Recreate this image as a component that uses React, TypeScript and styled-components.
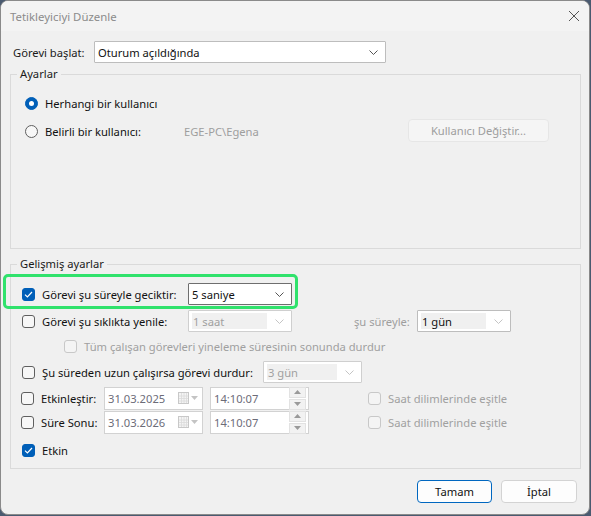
import styled, { createGlobalStyle, css } from "styled-components";

const GlobalStyle = createGlobalStyle`
  html, body {
    margin: 0;
    padding: 0;
    background: #4a5a70;
  }
  body {
    font-family: "Noto Sans", "Liberation Sans", sans-serif;
    font-size: 11.2px;
    color: #1a1a1a;
  }
`;

const Window = styled.div`
  position: relative;
  box-sizing: border-box;
  width: 590px;
  height: 515px;
  border: 1px solid #8a8a8a;
  border-radius: 8px;
  background: #f0f0f0;
  overflow: hidden;
  display: flex;
  flex-direction: column;
`;

const TitleBar = styled.div`
  height: 30px;
  flex: none;
  display: flex;
  align-items: center;
  justify-content: space-between;
  padding-left: 9px;
  background: #f3f3f3;
`;

const TitleText = styled.span`
  font-size: 11.4px;
  color: #8b8b8b;
  padding-top: 1px;
`;

const CloseButton = styled.div`
  width: 30px;
  height: 30px;
  display: flex;
  align-items: center;
  justify-content: center;
`;

const Content = styled.div`
  flex: 1;
  display: flex;
  flex-direction: column;
  padding: 0 8px 0 9px;
`;

const TopRow = styled.div`
  display: flex;
  align-items: center;
  height: 22px;
  margin-top: 10px;
  padding-left: 3px;
`;

const TopLabel = styled.span`
  width: 81px;
`;

const GroupBox = styled.div<{ $h: number; $mt: number }>`
  position: relative;
  box-sizing: border-box;
  height: ${(p) => p.$h}px;
  margin-top: ${(p) => p.$mt}px;
  border: 1px solid #dadada;
  display: flex;
  flex-direction: column;
`;

const GroupTitle = styled.span<{ $left: number }>`
  position: absolute;
  top: -9px;
  left: ${(p) => p.$left}px;
  padding: 0 3px;
  background: #f0f0f0;
  line-height: 16px;
`;

const Row = styled.div<{ $mt: number; $indent?: number }>`
  display: flex;
  align-items: center;
  height: 22px;
  margin-top: ${(p) => p.$mt}px;
  padding-left: ${(p) => p.$indent ?? 10}px;
`;

const OptionLabel = styled.label<{ $w?: number; $disabled?: boolean; $ml?: number }>`
  display: flex;
  align-items: center;
  gap: 7px;
  flex: none;
  width: ${(p) => (p.$w ? `${p.$w}px` : "auto")};
  margin-left: ${(p) => p.$ml ?? 0}px;
  color: ${(p) => (p.$disabled ? "#a0a0a0" : "#111")};
  white-space: nowrap;
`;

const Box = styled.span<{ $checked?: boolean; $disabled?: boolean }>`
  box-sizing: border-box;
  width: 13px;
  height: 13px;
  flex: none;
  border-radius: 3px;
  display: flex;
  align-items: center;
  justify-content: center;
  border: 1px solid #5f5f5f;
  background: #f7f7f7;
  ${(p) =>
    p.$checked &&
    css`
      border-color: #005fb8;
      background: #005fb8;
    `}
  ${(p) =>
    p.$disabled &&
    css`
      border-color: #c8c8c8;
      background: #f4f4f4;
    `}
`;

const Radio = styled.span<{ $checked?: boolean }>`
  box-sizing: border-box;
  width: 13px;
  height: 13px;
  flex: none;
  border-radius: 50%;
  display: flex;
  align-items: center;
  justify-content: center;
  border: 1px solid #5f5f5f;
  background: #f7f7f7;
  ${(p) =>
    p.$checked &&
    css`
      border-color: #005fb8;
      background: #005fb8;
      &::after {
        content: "";
        width: 5px;
        height: 5px;
        border-radius: 50%;
        background: #fff;
      }
    `}
`;

const Muted = styled.span<{ $ml?: number; $w?: number }>`
  color: #9e9e9e;
  margin-left: ${(p) => p.$ml ?? 0}px;
  width: ${(p) => (p.$w ? `${p.$w}px` : "auto")};
  flex: none;
  white-space: nowrap;
`;

const Combo = styled.div<{ $w: number; $focus?: boolean; $disabled?: boolean; $ml?: number }>`
  box-sizing: border-box;
  width: ${(p) => p.$w}px;
  height: 22px;
  flex: none;
  margin-left: ${(p) => p.$ml ?? 0}px;
  display: flex;
  align-items: center;
  justify-content: space-between;
  padding: 0 7px 0 3px;
  background: #fff;
  border: 1px solid ${(p) => (p.$focus ? "#6e6e6e" : p.$disabled ? "#cfcfcf" : "#bdbdbd")};
  border-radius: 1px;
  color: ${(p) => (p.$disabled ? "#a0a0a0" : "#111")};
`;

const ComboText = styled.span<{ $fill?: boolean }>`
  flex: 1;
  align-self: stretch;
  margin: 2px 8px 2px 0;
  padding-left: 1px;
  display: flex;
  align-items: center;
  background: ${(p) => (p.$fill ? "#f0f0f0" : "transparent")};
`;

const Field = styled.div<{ $w: number; $ml?: number }>`
  box-sizing: border-box;
  width: ${(p) => p.$w}px;
  height: 23px;
  flex: none;
  margin-left: ${(p) => p.$ml ?? 0}px;
  display: flex;
  align-items: center;
  justify-content: space-between;
  padding: 0 2px 0 3px;
  background: #fff;
  border: 1px solid #d2d2d2;
  color: #6c6c78;
`;

const Spinner = styled.div`
  display: flex;
  flex-direction: column;
  gap: 1px;
`;

const SpinPart = styled.span`
  width: 15px;
  height: 9px;
  display: flex;
  align-items: center;
  justify-content: center;
  background: #f2f2f2;
  border: 1px solid #e2e2e2;
`;

const Button = styled.div<{ $disabled?: boolean; $default?: boolean; $w: number }>`
  box-sizing: border-box;
  width: ${(p) => p.$w}px;
  height: 23px;
  flex: none;
  display: flex;
  align-items: center;
  justify-content: center;
  border-radius: 4px;
  background: ${(p) => (p.$disabled ? "#f5f5f5" : "#fdfdfd")};
  border: 1px solid ${(p) => (p.$default ? "#0067c0" : p.$disabled ? "#e6e6e6" : "#d3d3d3")};
  color: ${(p) => (p.$disabled ? "#9e9e9e" : "#111")};
`;

const UserButtonSlot = styled.div`
  margin-left: auto;
  margin-right: 31px;
  align-self: flex-end;
`;

const ButtonRow = styled.div`
  display: flex;
  justify-content: flex-end;
  gap: 9px;
  margin-top: 11px;
  padding-right: 4px;
`;

const Highlight = styled.div`
  position: absolute;
  left: 2px;
  top: 273px;
  width: 295px;
  height: 35px;
  box-sizing: border-box;
  border: 3px solid #30e26c;
  border-radius: 5px;
  pointer-events: none;
`;

const Chevron = ({ light }: { light?: boolean }) => (
  <svg width="9" height="5" viewBox="0 0 9 5">
    <polyline points="0.5,0.5 4.5,4.5 8.5,0.5" fill="none" stroke={light ? "#c4c4c4" : "#555"} strokeWidth="1" />
  </svg>
);

const Check = () => (
  <svg width="9" height="7" viewBox="0 0 9 7">
    <polyline points="1,3.6 3.4,6 8,1" fill="none" stroke="#fff" strokeWidth="1.2" />
  </svg>
);

const Calendar = () => (
  <svg width="22" height="12" viewBox="0 0 22 12">
    <rect x="0.5" y="0.5" width="10" height="11" fill="#f4f4f4" stroke="#c8c8c8" />
    <path d="M1 4h9M1 6.5h9M1 9h9M3.5 1v10M6 1v10M8.5 1v10" stroke="#dadada" strokeWidth="0.8" />
    <polygon points="13,4 20,4 16.5,8" fill="#c4c4c4" />
  </svg>
);

const Tri = ({ up }: { up?: boolean }) => (
  <svg width="7" height="4" viewBox="0 0 7 4">
    <polygon points={up ? "0,4 7,4 3.5,0" : "0,0 7,0 3.5,4"} fill="#9a9a9a" />
  </svg>
);

function CheckOption({
  text,
  checked,
  disabled,
  w,
  ml,
}: {
  text: string;
  checked?: boolean;
  disabled?: boolean;
  w?: number;
  ml?: number;
}) {
  return (
    <OptionLabel $w={w} $ml={ml} $disabled={disabled}>
      <Box $checked={checked} $disabled={disabled}>
        {checked && <Check />}
      </Box>
      {text}
    </OptionLabel>
  );
}

function DateTimeRow({ label, date, mt }: { label: string; date: string; mt: number }) {
  return (
    <Row $mt={mt}>
      <CheckOption text={label} w={83} />
      <Field $w={99}>
        {date}
        <Calendar />
      </Field>
      <Field $w={99} $ml={7}>
        14:10:07
        <Spinner>
          <SpinPart>
            <Tri up />
          </SpinPart>
          <SpinPart>
            <Tri />
          </SpinPart>
        </Spinner>
      </Field>
      <CheckOption text="Saat dilimlerinde eşitle" disabled ml={59} />
    </Row>
  );
}

export default function App() {
  return (
    <>
      <GlobalStyle />
      <Window>
        <TitleBar>
          <TitleText>Tetikleyiciyi Düzenle</TitleText>
          <CloseButton>
            <svg width="12" height="12" viewBox="0 0 12 12">
              <path d="M1 1L11 11M11 1L1 11" stroke="#555" strokeWidth="1" />
            </svg>
          </CloseButton>
        </TitleBar>
        <Content>
          <TopRow>
            <TopLabel>Görevi başlat:</TopLabel>
            <Combo $w={292}>
              Oturum açıldığında
              <Chevron />
            </Combo>
          </TopRow>

          <GroupBox $h={175} $mt={11}>
            <GroupTitle $left={6}>Ayarlar</GroupTitle>
            <Row $mt={17} $indent={14}>
              <OptionLabel>
                <Radio $checked />
                Herhangi bir kullanıcı
              </OptionLabel>
            </Row>
            <Row $mt={6} $indent={14}>
              <OptionLabel $w={159}>
                <Radio />
                Belirli bir kullanıcı:
              </OptionLabel>
              <Muted>EGE-PC\Egena</Muted>
              <UserButtonSlot>
                <Button $disabled $w={141}>
                  Kullanıcı Değiştir...
                </Button>
              </UserButtonSlot>
            </Row>
          </GroupBox>

          <GroupBox $h={205} $mt={15}>
            <GroupTitle $left={6}>Gelişmiş ayarlar</GroupTitle>
            <Row $mt={18} $indent={11}>
              <CheckOption text="Görevi şu süreyle geciktir:" checked w={166} />
              <Combo $w={104} $focus>
                5 saniye
                <Chevron />
              </Combo>
            </Row>
            <Row $mt={5} $indent={11}>
              <CheckOption text="Görevi şu sıklıkta yenile:" w={166} />
              <Combo $w={104} $disabled>
                <ComboText $fill>1 saat</ComboText>
                <Chevron light />
              </Combo>
              <Muted $ml={62} $w={63}>
                şu süreyle:
              </Muted>
              <Combo $w={94}>
                <ComboText $fill>1 gün</ComboText>
                <Chevron light />
              </Combo>
            </Row>
            <Row $mt={3} $indent={53}>
              <CheckOption text="Tüm çalışan görevleri yineleme süresinin sonunda durdur" disabled />
            </Row>
            <Row $mt={4} $indent={11}>
              <CheckOption text="Şu süreden uzun çalışırsa görevi durdur:" w={241} />
              <Combo $w={99} $disabled>
                <ComboText $fill>3 gün</ComboText>
                <Chevron light />
              </Combo>
            </Row>
            <DateTimeRow label="Etkinleştir:" date="31.03.2025" mt={4} />
            <DateTimeRow label="Süre Sonu:" date="31.03.2026" mt={2} />
            <Row $mt={6} $indent={11}>
              <CheckOption text="Etkin" checked />
            </Row>
          </GroupBox>

          <ButtonRow>
            <Button $default $w={75}>
              Tamam
            </Button>
            <Button $w={76}>İptal</Button>
          </ButtonRow>
        </Content>
        <Highlight />
      </Window>
    </>
  );
}
